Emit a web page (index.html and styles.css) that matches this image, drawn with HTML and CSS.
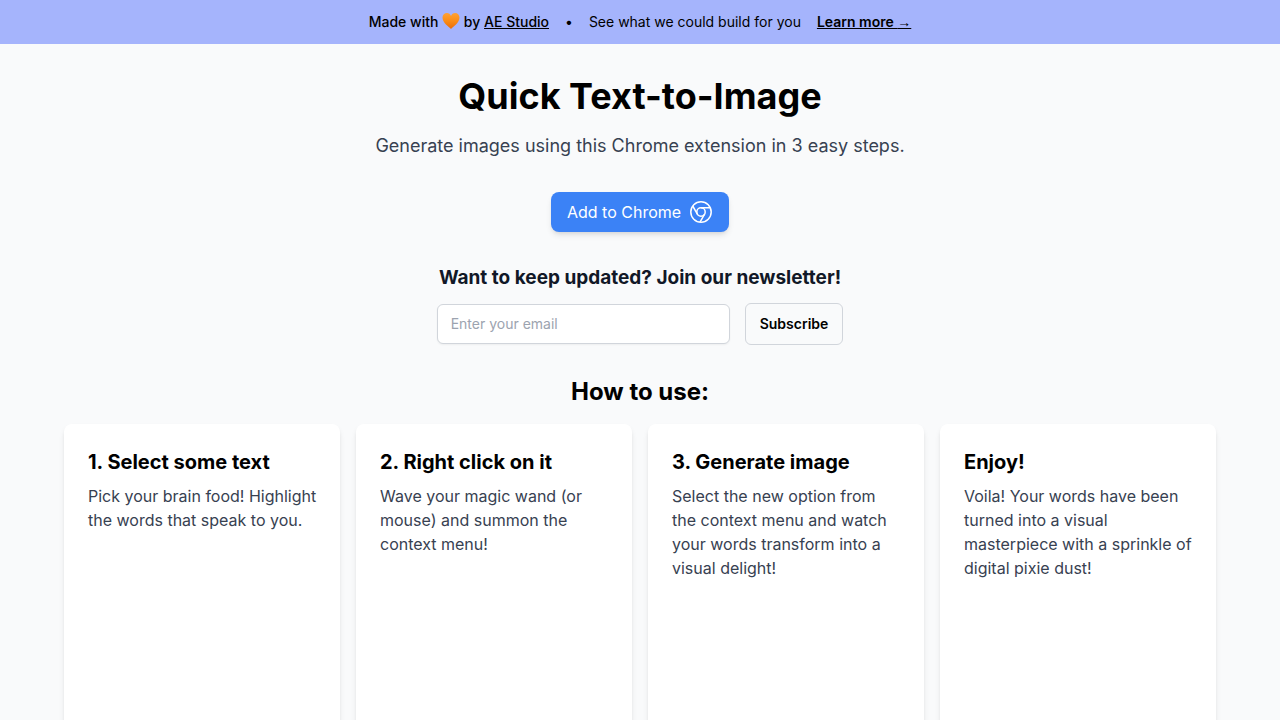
FILE: index.html
```html
<!DOCTYPE html>
<html lang="en">
<head>
  <meta charset="UTF-8">
  <meta name="viewport" content="width=device-width, initial-scale=1.0">
  <title>Quick Text-to-Image</title>
  <link rel="stylesheet" href="styles.css">
</head>
<body>
  <div class="banner">
    <p class="made-with">
      Made with
      <svg class="heart" viewBox="0 0 18 18" aria-hidden="true">
        <defs>
          <linearGradient id="heart-fill" x1="0" y1="0" x2="0" y2="1">
            <stop offset="0" stop-color="#ffa234"/>
            <stop offset="0.5" stop-color="#fb8c16"/>
            <stop offset="1" stop-color="#e96c08"/>
          </linearGradient>
        </defs>
        <path fill="url(#heart-fill)" d="M9 17C7 15.200 0.500 10.800 0.500 5.600C0.500 2.900 2.500 1 4.900 1C6.900 1 8.300 2.200 9 3.900C9.700 2.200 11.100 1 13.100 1C15.500 1 17.500 2.900 17.500 5.600C17.500 10.800 11 15.200 9 17Z"/>
      </svg>
      by <a href="#">AE Studio</a>
    </p>
    <span>•</span>
    <p>See what we could build for you</p>
    <a class="learn-more" href="#">Learn more <span class="arrow">→</span></a>
  </div>

  <main class="container">
    <h1>Quick Text-to-Image</h1>
    <p class="subtitle">Generate images using this Chrome extension in 3 easy steps.</p>

    <a class="add-button" href="#">
      Add to Chrome
      <svg class="chrome-icon" viewBox="0 0 24 24" fill="none" stroke="currentColor" stroke-width="1.500" aria-hidden="true">
        <circle cx="12" cy="12" r="10.200"/>
        <circle cx="12" cy="12" r="4.200"/>
        <path d="M12 7.800H21.300M8.400 14.100L3.700 6M15.600 14.100L11 22.100"/>
      </svg>
    </a>

    <form class="newsletter" onsubmit="return false">
      <h2><label for="email">Want to keep updated? Join our newsletter!</label></h2>
      <div class="newsletter-row">
        <input type="email" id="email" placeholder="Enter your email">
        <button type="submit">Subscribe</button>
      </div>
    </form>

    <h2 class="how-to">How to use:</h2>
    <div class="steps">
      <div class="card">
        <h3>1. Select some text</h3>
        <p>Pick your brain food! Highlight the words that speak to you.</p>
      </div>
      <div class="card">
        <h3>2. Right click on it</h3>
        <p>Wave your magic wand (or mouse) and summon the context menu!</p>
      </div>
      <div class="card">
        <h3>3. Generate image</h3>
        <p>Select the new option from the context menu and watch your words transform into a visual delight!</p>
      </div>
      <div class="card">
        <h3>Enjoy!</h3>
        <p>Voila! Your words have been turned into a visual masterpiece with a sprinkle of digital pixie dust!</p>
      </div>
    </div>
  </main>
</body>
</html>
```

FILE: styles.css
```css
* {
  box-sizing: border-box;
}
body {
  margin: 0;
  font-family: Inter, "Liberation Sans", sans-serif;
  font-size: 16px;
  line-height: 24px;
  color: #000;
  background-color: #f9fafb;
}
h1, h2, h3, p {
  margin: 0;
}
.banner {
  display: flex;
  flex-wrap: wrap;
  justify-content: center;
  align-items: center;
  gap: 16px;
  padding: 12px 16px;
  background-color: #a5b4fc;
  font-size: 14px;
  line-height: 20px;
}
.banner a {
  color: inherit;
}
.made-with {
  font-weight: 500;
}
.heart {
  width: 18px;
  height: 18px;
  vertical-align: -3px;
}
.learn-more {
  font-weight: 600;
}
.arrow {
  font-family: "Liberation Sans", sans-serif;
  font-weight: 400;
}
.container {
  display: flex;
  flex-direction: column;
  align-items: center;
  padding: 32px 64px;
}
h1 {
  font-size: 36px;
  line-height: 40px;
  font-weight: 700;
  text-align: center;
}
.subtitle {
  margin-top: 16px;
  font-size: 18px;
  line-height: 28px;
  color: #374151;
  text-align: center;
}
.add-button {
  display: flex;
  align-items: center;
  gap: 8px;
  margin-top: 32px;
  padding: 8px 16px;
  border-radius: 8px;
  background-color: #3b82f6;
  color: #fff;
  text-decoration: none;
  box-shadow: 0 4px 6px -1px rgba(0,0,0,0.1), 0 2px 4px -2px rgba(0,0,0,0.1);
}
.add-button:hover {
  background-color: #2563eb;
}
.chrome-icon {
  width: 24px;
  height: 24px;
}
.newsletter {
  margin-top: 32px;
}
.newsletter h2 {
  font-size: 19px;
  line-height: 28px;
  font-weight: 700;
  color: #111827;
  text-align: center;
}
.newsletter-row {
  display: flex;
  justify-content: center;
  align-items: center;
  gap: 15px;
  margin-top: 11px;
}
.newsletter input {
  width: 293px;
  min-width: 0;
  padding: 9px 13px;
  border: 1px solid #d1d5db;
  border-radius: 6px;
  background-color: #fff;
  font-family: inherit;
  font-size: 14px;
  line-height: 20px;
  box-shadow: 0 1px 2px rgba(0,0,0,0.05);
}
.newsletter input::placeholder {
  color: #9ca3af;
}
.newsletter button {
  padding: 10px 14px;
  border: 1px solid #d1d5db;
  border-radius: 6px;
  background-color: transparent;
  color: #000;
  font-family: inherit;
  font-size: 14px;
  line-height: 20px;
  font-weight: 600;
  cursor: pointer;
}
.how-to {
  margin-top: 31px;
  font-size: 24px;
  line-height: 32px;
  font-weight: 700;
}
.steps {
  display: grid;
  grid-template-columns: repeat(4, 1fr);
  gap: 16px;
  width: 100%;
  margin-top: 16px;
}
.card {
  min-height: 360px;
  padding: 24px 20px 24px 24px;
  border-radius: 8px;
  background-color: #fff;
  box-shadow: 0 4px 6px -1px rgba(0,0,0,0.1), 0 2px 4px -2px rgba(0,0,0,0.1);
}
.card h3 {
  font-size: 20px;
  line-height: 28px;
  font-weight: 700;
}
.card p {
  margin-top: 8px;
  color: #374151;
}
@media (max-width: 900px) {
  .container {
    padding: 32px 16px;
  }
  .steps {
    grid-template-columns: repeat(2, 1fr);
  }
}
```
